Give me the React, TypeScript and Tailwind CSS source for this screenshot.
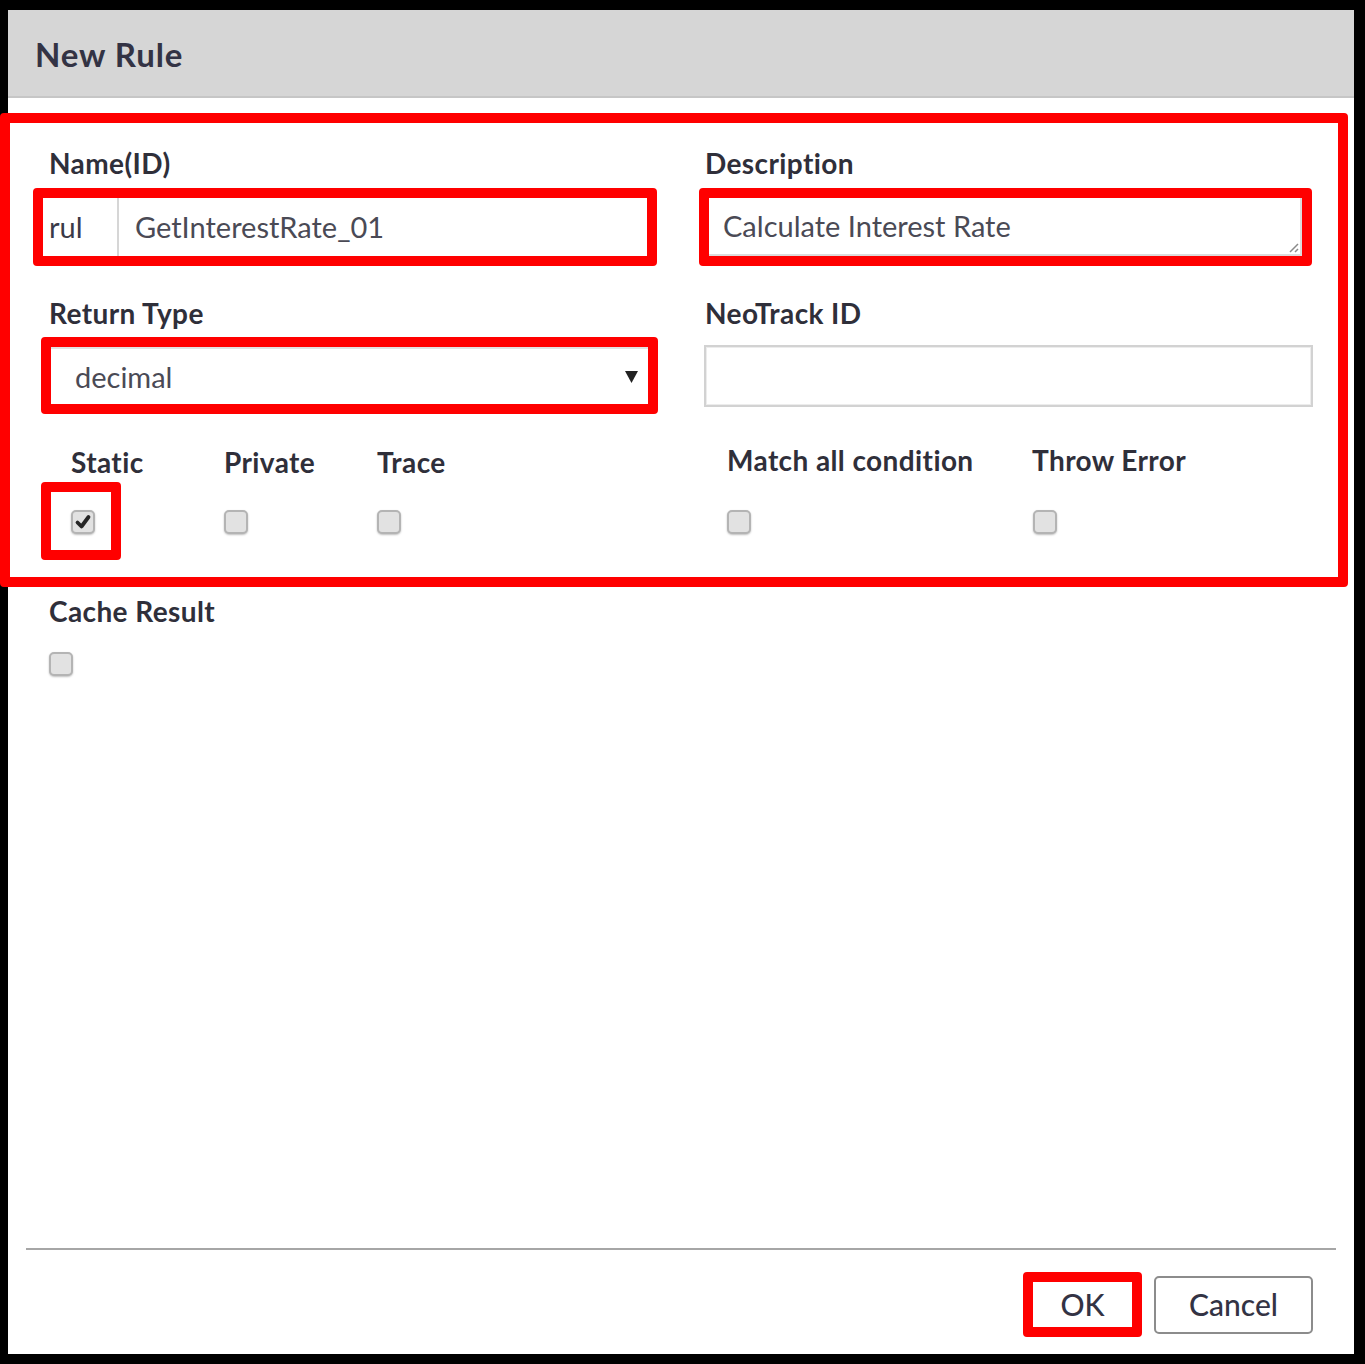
import React from 'react';

const RED = 'border-[#ff0000]';

const Checkbox: React.FC<{ checked?: boolean }> = ({ checked }) => (
  <div className="w-[24px] h-[24px] rounded-[5px] border-2 border-[#b4b4b4] bg-[#e2e2e2] shadow-[0_1px_2px_rgba(0,0,0,0.25)] flex items-center justify-center">
    {checked && (
      <svg width="18" height="18" viewBox="0 0 18 18">
        <path d="M3.5 9.5 L7.5 13.5 L14.5 4" fill="none" stroke="#262626" strokeWidth="3.8" strokeLinecap="round" strokeLinejoin="round" />
      </svg>
    )}
  </div>
);

const Label: React.FC<{ children: React.ReactNode; className?: string }> = ({ children, className }) => (
  <div className={`h-[30px] leading-[30px] text-[28px] font-bold text-[#2f2f3a] tracking-[0.4px] whitespace-nowrap ${className ?? ''}`}>
    {children}
  </div>
);

export default function App() {
  return (
    <div className="w-[1365px] h-[1364px] bg-black pt-[10px] pl-[8px] pr-[11px] pb-[10px] font-[Lato,sans-serif]">
      <div className="h-full bg-white flex flex-col">
        {/* header */}
        <div className="h-[88px] shrink-0 bg-[#d6d6d6] border-b-2 border-[#c6c6c6] flex items-center pl-[27px] pt-[4px]">
          <span className="text-[33px] font-bold text-[#333344] tracking-[0.9px]">New Rule</span>
        </div>

        {/* highlighted form area */}
        <div className={`mt-[15px] -ml-[8px] w-[1348px] border-[10px] ${RED} rounded-[4px] pt-[25px] pb-[17px]`}>
          {/* row 1 labels */}
          <div className="flex">
            <Label className="ml-[39px] w-[656px]">Name(ID)</Label>
            <Label>Description</Label>
          </div>

          {/* row 1 inputs */}
          <div className="flex mt-[10px]">
            <div className={`ml-[23px] w-[624px] h-[78px] border-[10px] ${RED} rounded-[4px] flex items-stretch`}>
              <div className="w-[76px] pl-[6px] flex items-center text-[29px] text-[#3a3a48] border-r-2 border-[#d6d6d6]">rul</div>
              <div className="pl-[16px] flex items-center text-[29px] text-[#4a4a55]">GetInterestRate_01</div>
            </div>
            <div className={`ml-[42px] w-[613px] h-[78px] border-[10px] ${RED} rounded-[4px]`}>
              <div className="relative h-full border-r-2 border-b-2 border-[#dcdcdc] pl-[14px] flex items-center text-[29px] text-[#4a4a55]">
                Calculate Interest Rate
                <svg className="absolute right-[1px] bottom-[1px]" width="12" height="12" viewBox="0 0 12 12">
                  <path d="M11 3 L3 11 M11 8 L8 11" stroke="#8a8a8a" strokeWidth="1.5" />
                </svg>
              </div>
            </div>
          </div>

          {/* row 2 labels */}
          <div className="flex mt-[32px]">
            <Label className="ml-[39px] w-[656px]">Return Type</Label>
            <Label>NeoTrack ID</Label>
          </div>

          {/* row 2 inputs */}
          <div className="flex items-center mt-[9px]">
            <div className={`ml-[31px] w-[617px] h-[77px] border-[10px] ${RED} rounded-[4px]`}>
              <div className="h-full border-t-2 border-[#e2e2e2] pl-[24px] pr-[10px] flex items-center justify-between text-[29px] text-[#4a4a55]">
                <span>decimal</span>
                <svg width="13" height="14" viewBox="0 0 13 14">
                  <polygon points="0,1 13,1 6.5,13" fill="#222" />
                </svg>
              </div>
            </div>
            <div className="ml-[46px] w-[609px] h-[62px] border-2 border-[#d2d2d2] shadow-[inset_0_0_0_1px_#ececec]" />
          </div>

          {/* row 3 labels */}
          <div className="flex mt-[33px]">
            <Label className="ml-[61px] w-[153px]">Static</Label>
            <Label className="w-[153px]">Private</Label>
            <Label className="w-[350px]">Trace</Label>
            <Label className="w-[305px] -mt-[2px]">Match all condition</Label>
            <Label className="-mt-[2px]">Throw Error</Label>
          </div>

          {/* row 3 checkboxes */}
          <div className="flex items-start mt-[5px]">
            <div className={`ml-[31px] w-[80px] h-[78px] border-[10px] ${RED} rounded-[4px] pl-[20px] pt-[18px]`}>
              <Checkbox checked />
            </div>
            <div className="ml-[103px] mt-[28px]"><Checkbox /></div>
            <div className="ml-[129px] mt-[28px]"><Checkbox /></div>
            <div className="ml-[326px] mt-[28px]"><Checkbox /></div>
            <div className="ml-[282px] mt-[28px]"><Checkbox /></div>
          </div>
        </div>

        {/* cache result */}
        <Label className="ml-[41px] mt-[9px]">Cache Result</Label>
        <div className="ml-[41px] mt-[26px]"><Checkbox /></div>

        {/* footer */}
        <div className="mt-auto mx-[18px] border-t-2 border-[#a6a6a6]" />
        <div className="flex justify-end items-center gap-[12px] pr-[41px] pt-[22px] pb-[17px]">
          <div className={`w-[119px] h-[65px] border-[10px] ${RED} rounded-[4px] flex items-center justify-center text-[30px] font-medium text-[#333344]`}>
            OK
          </div>
          <div className="w-[159px] h-[58px] border-2 border-[#8c8c8c] rounded-[5px] flex items-center justify-center text-[30px] font-medium text-[#333344]">
            Cancel
          </div>
        </div>
      </div>
    </div>
  );
}
